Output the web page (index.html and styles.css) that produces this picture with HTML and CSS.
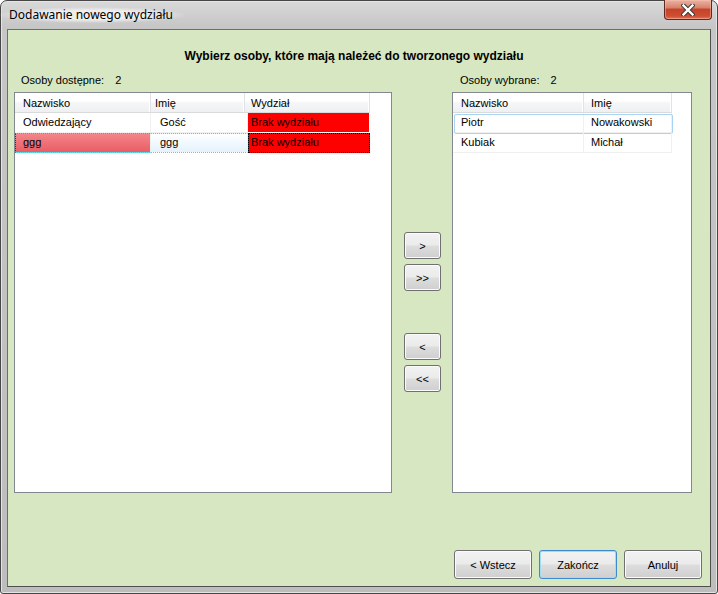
FILE: index.html
```html
<!DOCTYPE html>
<html lang="pl">
<head>
<meta charset="utf-8">
<title>Dodawanie nowego wydziału</title>
<link rel="stylesheet" href="styles.css">
</head>
<body>
<div class="window">
  <div class="titlebar">
    <span class="title">Dodawanie nowego wydziału</span>
    <button class="close" aria-label="Zamknij">
      <svg width="14" height="12" viewBox="0 0 14 12">
        <path d="M2.5 1.5 L11.5 10.5 M11.5 1.5 L2.5 10.5" fill="none" stroke="#3a3a3a" stroke-width="4.4" stroke-linecap="square"/>
        <path d="M2.5 1.5 L11.5 10.5 M11.5 1.5 L2.5 10.5" fill="none" stroke="#ffffff" stroke-width="2.4" stroke-linecap="square"/>
      </svg>
    </button>
  </div>
  <div class="client">
    <h1 class="heading">Wybierz osoby, które mają należeć do tworzonego wydziału</h1>
    <div class="main">
      <div class="label label-left">Osoby dostępne:<span class="count">2</span></div>
      <div></div>
      <div class="label label-right">Osoby wybrane:<span class="count">2</span></div>

      <div class="grid">
        <div class="hdr">
          <div class="hc lc1">Nazwisko</div>
          <div class="hc lc2">Imię</div>
          <div class="hc lc3">Wydział</div>
        </div>
        <div class="row">
          <div class="cell l1">Odwiedzający</div>
          <div class="cell l2">Gość</div>
          <div class="cell l3 red">Brak wydziału</div>
        </div>
        <div class="row">
          <div class="cell l1 sel-pink">ggg</div>
          <div class="cell l2 sel-blue">ggg</div>
          <div class="cell l3 red focus">Brak wydziału</div>
        </div>
      </div>

      <div class="movers">
        <button class="btn mv">&gt;</button>
        <button class="btn mv">&gt;&gt;</button>
        <button class="btn mv mv-gap">&lt;</button>
        <button class="btn mv">&lt;&lt;</button>
      </div>

      <div class="grid">
        <div class="hdr">
          <div class="hc rc1">Nazwisko</div>
          <div class="hc rc2">Imię</div>
        </div>
        <div class="row hot">
          <div class="cell r1">Piotr</div>
          <div class="cell r2">Nowakowski</div>
        </div>
        <div class="row">
          <div class="cell r1">Kubiak</div>
          <div class="cell r2">Michał</div>
        </div>
      </div>
    </div>
    <div class="footer">
      <button class="btn fb">&lt; Wstecz</button>
      <button class="btn fb default">Zakończ</button>
      <button class="btn fb">Anuluj</button>
    </div>
  </div>
</div>
</body>
</html>
```

FILE: styles.css
```css
* { box-sizing: border-box; }

body {
  margin: 0;
  width: 718px;
  height: 594px;
  overflow: hidden;
  background: #ffffff;
  font-family: "Liberation Sans", Arial, sans-serif;
  font-size: 11px;
  color: #000;
}

.window {
  width: 718px;
  height: 594px;
  border: 1px solid #474747;
  border-radius: 7px 7px 3px 3px;
  background: linear-gradient(#d9d9d9 0px, #c6c6c6 26px, #bdbdbd 100%);
  box-shadow: inset 0 0 0 1px #e4e4e4;
  padding: 0 6px 6px 6px;
  display: flex;
  flex-direction: column;
}

.titlebar {
  height: 28px;
  display: flex;
  justify-content: space-between;
  align-items: flex-start;
}

.title {
  font-family: "Noto Sans", "Liberation Sans", sans-serif;
  font-size: 12px;
  line-height: 16px;
  margin-top: 6px;
  margin-left: -8px;
  padding: 0 12px 0 10px;
  color: #000;
  background: radial-gradient(ellipse at center, rgba(240,240,240,0.95) 40%, rgba(240,240,240,0) 72%);
}

.close {
  width: 48px;
  height: 20px;
  margin-top: -1px;
  margin-right: -1px;
  padding: 0;
  border: 1px solid #5e2a20;
  border-top: none;
  border-radius: 0 0 4px 4px;
  background: linear-gradient(#e9b3a5 0%, #d9826c 40%, #c5432a 50%, #cf4f33 85%, #e07a5e 100%);
  box-shadow: inset 0 0 0 1px rgba(255,200,180,0.45);
  display: flex;
  align-items: center;
  justify-content: center;
}

.client {
  flex: 1;
  border: 1px solid;
  border-color: #6e6e6e #4f4f4f #4f4f4f #6e6e6e;
  background: #d6e7c1;
  display: flex;
  flex-direction: column;
}

.heading {
  margin: 19px 0 0 0;
  padding-right: 10px;
  font-size: 12px;
  line-height: 14px;
  font-weight: bold;
  text-align: center;
}

.main {
  margin-top: 10px;
  padding-left: 6px;
  display: grid;
  grid-template-columns: 378px 60px 240px;
  grid-template-rows: 14px 401px;
  row-gap: 5px;
}

.label {
  line-height: 15px;
  white-space: nowrap;
}
.label-left { padding-left: 7px; }
.label-right { padding-left: 8px; }
.count { margin-left: 11px; }

.grid {
  border: 1px solid #828790;
  background: #ffffff;
  overflow: hidden;
}

.hdr {
  display: flex;
  height: 20px;
}

.hc {
  height: 20px;
  line-height: 21px;
  background: linear-gradient(#ffffff 0%, #ffffff 40%, #f4f5f7 55%, #eef0f2 100%);
  border-right: 1px solid #e1e2e5;
  border-bottom: 1px solid #d9dadc;
  box-shadow: inset -1px 0 0 #ffffff;
  white-space: nowrap;
}

.lc1 { width: 136px; padding-left: 8px; }
.lc2 { width: 94px; padding-left: 4px; }
.lc3 { width: 125px; padding-left: 6px; }
.rc1 { width: 131px; padding-left: 8px; }
.rc2 { width: 88px; padding-left: 7px; }

.row {
  display: flex;
  height: 20px;
  position: relative;
}

.cell {
  height: 20px;
  line-height: 19px;
  border-right: 1px solid #f0f0f0;
  border-bottom: 1px solid #f0f0f0;
  white-space: nowrap;
}

.l1 { width: 136px; padding-left: 8px; }
.l2 { width: 97px; padding-left: 9px; }
.l3 { width: 122px; padding-left: 3px; }
.r1 { width: 131px; padding-left: 8px; }
.r2 { width: 88px; padding-left: 7px; }

.red {
  background: #ff0000;
  border-color: #ffffff;
}

.sel-pink {
  background: linear-gradient(#f3858a, #ea5d64);
  border-top: 1px dotted #5fe0f0;
  border-bottom: 1px dotted #5fe0f0;
  border-left: 1px dotted #b00000;
  padding-left: 7px;
  line-height: 17px;
}

.sel-blue {
  background: linear-gradient(#ffffff, #e3f2fc);
  border-top: 1px dotted #38d8f0;
  border-bottom: 1px dotted #38d8f0;
  line-height: 17px;
}

.focus {
  border: 1px dotted #000000;
  line-height: 17px;
  padding-left: 2px;
}

.row.hot::after {
  content: "";
  position: absolute;
  left: 1px;
  top: 1px;
  width: 217px;
  height: 18px;
  border: 1px solid #a9d3f3;
  border-radius: 2px;
  pointer-events: none;
}

.btn {
  font-family: "Liberation Sans", Arial, sans-serif;
  font-size: 11px;
  color: #000;
  border: 1px solid #707070;
  border-radius: 3px;
  background: linear-gradient(#f2f2f2 0%, #ebebeb 48%, #dddddd 52%, #cfcfcf 100%);
  box-shadow: inset 0 0 0 1px #fbfbfb;
  padding: 0;
}

.movers {
  padding-top: 140px;
  padding-left: 12px;
  display: flex;
  flex-direction: column;
  gap: 5px;
}

.mv {
  width: 37px;
  height: 27px;
}

.mv-gap { margin-top: 37px; }

.footer {
  margin-top: 57px;
  padding-right: 8px;
  display: flex;
  justify-content: flex-end;
  gap: 7px;
}

.fb {
  width: 78px;
  height: 29px;
}

.default {
  border-color: #3c8bcf;
  box-shadow: inset 0 0 0 1px #9fdcf7;
}
```
